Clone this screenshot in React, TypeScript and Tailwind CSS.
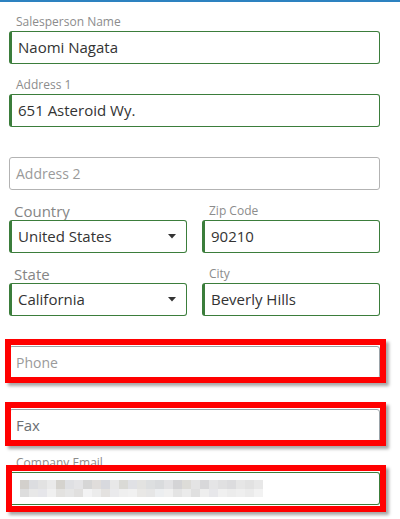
import React from "react";

type FieldProps = {
  label?: string;
  big?: boolean;
  value?: string;
  placeholder?: string;
  tone?: "valid" | "plain";
  select?: boolean;
  dim?: boolean;
};

function Caret() {
  return (
    <svg width="8" height="5" viewBox="0 0 8 5" className="absolute right-[10px] top-[13px]">
      <path d="M0 0 L8 0 L4 4.5 Z" fill="#333" />
    </svg>
  );
}

function Field({ label, big, value, placeholder, tone = "valid", select, dim }: FieldProps) {
  const box =
    tone === "valid"
      ? "border border-l-[3px] border-[#3b7d3b] pl-[6px]"
      : "border border-[#b3b3b3] pl-[6px]";
  return (
    <div className="flex flex-col">
      <div className="h-[22px] flex items-end">
        {label && (
          <span
            className={
              big
                ? "text-[15px] leading-[18px] text-[#858585] pl-[5px]"
                : "text-[12px] leading-[16px] text-[#8c8c8c] pl-[7px] pb-[1px]"
            }
          >
            {label}
          </span>
        )}
      </div>
      <div className={`relative h-[33px] rounded-[3px] bg-white flex items-center ${box}`}>
        {value ? (
          <span className={`text-[15px] ${dim ? "text-[#666]" : "text-[#333]"}`}>{value}</span>
        ) : (
          <span className="text-[14px] text-[#9a9a9a]">{placeholder}</span>
        )}
        {select && <Caret />}
      </div>
    </div>
  );
}

function RedMark({ tall }: { tall?: boolean }) {
  return (
    <div
      className={`absolute -left-[5px] -right-[7px] -top-[8px] ${
        tall ? "-bottom-[8px]" : "-bottom-[5px]"
      } border-[6px] border-[#ff0000] shadow-[3px_3px_3px_rgba(0,0,0,0.35)] pointer-events-none`}
    />
  );
}

const topRow = [
  "bg-[#d3d0cc]", "bg-[#dcdde0]", "bg-[#e2e2e2]", "bg-[#eaeaea]", "bg-[#d5d3ce]", "bg-[#dfe0e3]",
  "bg-[#e4e4e6]", "bg-[#d6d6d6]", "bg-[#e0dddb]", "bg-[#d8d9de]", "bg-[#e8e8e8]", "bg-[#dadad6]",
  "bg-[#e0e1e5]", "bg-[#e3e3e1]", "bg-[#dddfe0]", "bg-[#d9dbdd]", "bg-[#e2e2e4]", "bg-[#d4d4d6]",
  "bg-[#dddcd8]", "bg-[#e4e4e4]", "bg-[#d8d8da]", "bg-[#e5e5e6]", "bg-[#e0e0e1]", "bg-[#dcdcde]",
  "bg-[#e6e6e6]", "bg-[#e2e2e2]", "bg-[#e8e8e8]",
];
const bottomRow = [
  "bg-[#dddddd]", "bg-[#e8e8e8]", "bg-[#e6e6ea]", "bg-[#f0f0f0]", "bg-[#e3e2e0]", "bg-[#e6e6e6]",
  "bg-[#e1e0df]", "bg-[#f3f3f4]", "bg-[#ececec]", "bg-[#e4e2e0]", "bg-[#eaeaec]", "bg-[#efefef]",
  "bg-[#f1f1f1]", "bg-[#e9e8e6]", "bg-[#e6e6e6]", "bg-[#eceef0]", "bg-[#f0f0f0]", "bg-[#e4e4e4]",
  "bg-[#ebebeb]", "bg-[#e0e0e0]", "bg-[#eeeeee]", "bg-[#e7e7ea]", "bg-[#f0f0f0]", "bg-[#ececec]",
  "bg-[#efefef]", "bg-[#ebebeb]", "bg-[#f2f2f2]",
];

export default function App() {
  return (
    <div
      className="w-[400px] h-[519px] bg-white overflow-hidden"
      style={{ fontFamily: "'Open Sans', 'Noto Sans', sans-serif" }}
    >
      <div className="h-[2px] bg-[#2d82c0]" />
      <div className="pl-[9px] pr-[20px] pt-[7px] flex flex-col gap-[8px]">
        <Field label="Salesperson Name" value="Naomi Nagata" />
        <Field label="Address 1" value="651 Asteroid Wy." />
        <Field placeholder="Address 2" tone="plain" />

        <div className="grid grid-cols-2 gap-x-[15px] gap-y-[8px]">
          <Field label="Country" big value="United States" select />
          <Field label="Zip Code" value="90210" />
          <Field label="State" big value="California" select />
          <Field label="City" value="Beverly Hills" />
        </div>

        {/* Phone */}
        <div className="flex flex-col">
          <div className="h-[22px]" />
          <div className="relative h-[33px] rounded-[3px] border border-[#9aa3a8] pl-[6px] flex items-center">
            <span className="text-[14px] text-[#9a9a9a]">Phone</span>
            <RedMark />
          </div>
        </div>

        {/* Fax */}
        <div className="flex flex-col">
          <div className="h-[22px]" />
          <div className="relative h-[33px] rounded-[3px] border border-[#9aa3a8] pl-[6px] flex items-center">
            <span className="text-[15px] text-[#6b6f73]">Fax</span>
            <RedMark />
          </div>
        </div>

        {/* Company Email */}
        <div className="flex flex-col">
          <div className="h-[22px] flex items-end">
            <span className="text-[12px] leading-[16px] text-[#8c8c8c] pl-[7px] pb-[1px]">
              Company Email
            </span>
          </div>
          <div className="relative h-[33px] rounded-[3px] border border-l-[2px] border-[#3b7d3b] border-l-[#5a6a5a] pl-[9px] flex items-center">
            <div className="flex flex-col">
              <div className="flex">
                {topRow.map((c, i) => (
                  <div key={i} className={`w-[9px] h-[9px] ${c}`} />
                ))}
              </div>
              <div className="flex">
                {bottomRow.map((c, i) => (
                  <div key={i} className={`w-[9px] h-[8px] ${c}`} />
                ))}
              </div>
            </div>
            <RedMark tall />
          </div>
        </div>
      </div>
    </div>
  );
}
